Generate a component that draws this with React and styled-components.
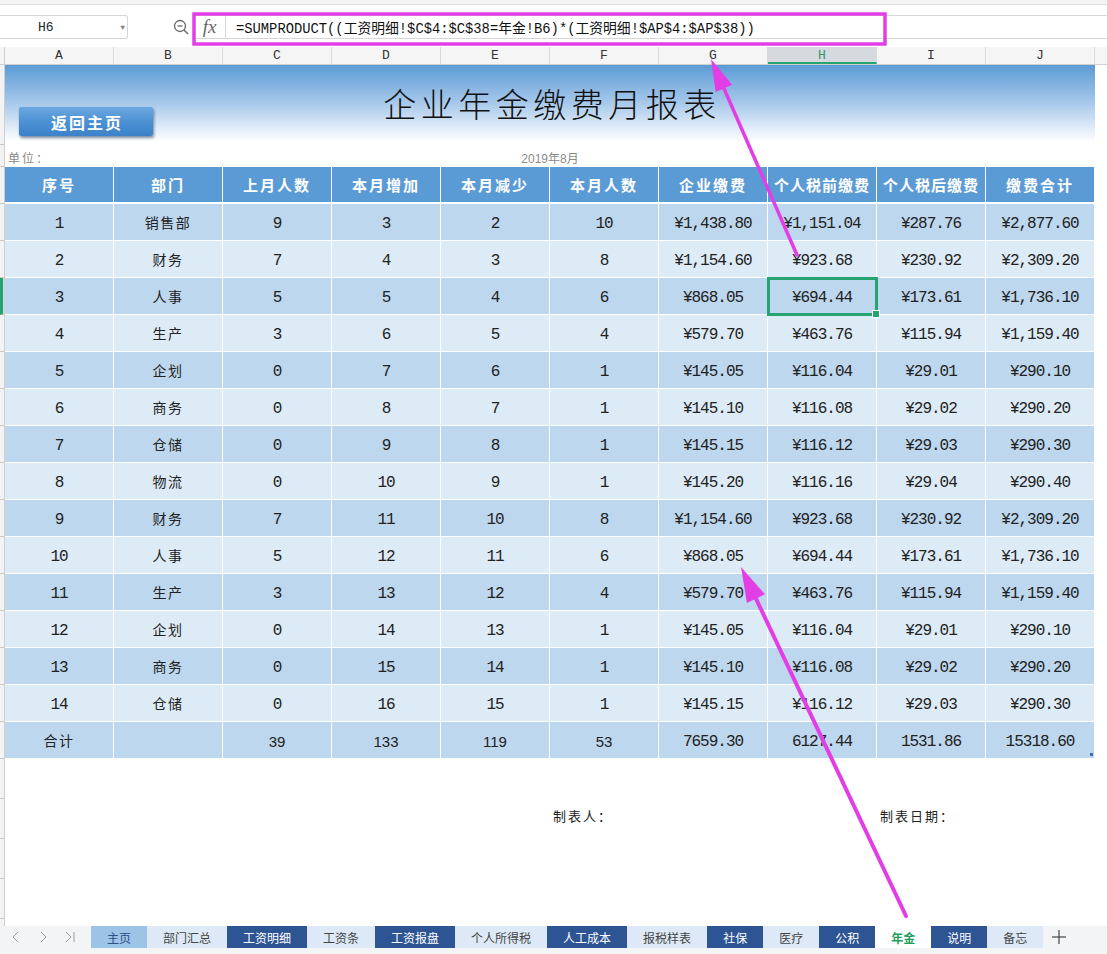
import React from "react";
import styled, { createGlobalStyle, css } from "styled-components";

const GlobalStyle = createGlobalStyle`
  html, body { margin: 0; padding: 0; background: #fff; }
  body {
    width: 1107px; height: 954px; overflow: hidden;
    font-family: "Noto Sans CJK SC", "Noto Sans", sans-serif;
    color: #222;
  }
  * { box-sizing: border-box; }
`;

const MONO = `"Liberation Mono", "Noto Sans CJK SC", monospace`;
const CJK = `"Noto Sans CJK SC", "Noto Sans", sans-serif`;

const Window = styled.div`
  position: relative;
  width: 1107px;
  height: 954px;
  display: flex;
  flex-direction: column;
  background: #fff;
`;

const TopStrip = styled.div`
  height: 5px;
  background: #f4f4f4;
  border-bottom: 1px solid #dedede;
`;

const FormulaRow = styled.div`
  height: 42px;
  display: flex;
  align-items: center;
  padding-top: 2px;
`;

const NameBox = styled.div`
  width: 128px;
  height: 24px;
  border: 1px solid #d6d6d6;
  border-left: none;
  border-radius: 0 3px 3px 0;
  display: flex;
  align-items: center;
  padding-left: 38px;
  font-family: ${MONO};
  font-size: 13px;
  color: #222;
`;

const Caret = styled.span`
  margin-left: auto;
  margin-right: 2px;
  font-size: 8px;
  color: #888;
`;

const ZoomIcon = styled.svg`
  margin-left: 45px;
  width: 16px;
  height: 16px;
  flex: none;
`;

const FxCell = styled.div`
  margin-left: 5px;
  width: 32px;
  height: 24px;
  border-top: 1px solid #d6d6d6;
  border-bottom: 1px solid #d6d6d6;
  border-right: 1px solid #d6d6d6;
  display: flex;
  align-items: center;
  justify-content: center;
  font-family: "Liberation Serif", serif;
  font-style: italic;
  font-size: 19px;
  color: #666;
`;

const FormulaInput = styled.div`
  flex: 1;
  height: 24px;
  border-top: 1px solid #d6d6d6;
  border-bottom: 1px solid #d6d6d6;
  display: flex;
  align-items: center;
  padding-left: 10px;
  font-family: ${MONO};
  font-size: 13.8px;
  color: #111;
  white-space: nowrap;
`;

const ColHeadRow = styled.div`
  height: 18px;
  display: flex;
  background: #f5f5f5;
  border-bottom: 1px solid #cfcfcf;
`;

const CornerCell = styled.div`
  width: 5px;
  border-right: 1px solid #cccccc;
`;

const ColHead = styled.div`
  width: 109px;
  flex: none;
  display: flex;
  align-items: center;
  justify-content: center;
  border-right: 1px solid #dadada;
  font-family: ${MONO};
  font-size: 13px;
  color: #333;
  ${(p) =>
    p.$active &&
    css`
      background: #d6d9dd;
      color: #2f9a6a;
      border-bottom: 2px solid #25a472;
      padding-top: 2px;
    `}
`;

const ColRest = styled.div`
  flex: 1;
`;

const Sheet = styled.div`
  flex: 1;
  min-height: 0;
  display: flex;
  overflow: hidden;
`;

const RowHeads = styled.div`
  width: 5px;
  flex: none;
  display: flex;
  flex-direction: column;
  background: #f3f3f3;
  border-right: 1px solid #cfcfcf;
`;

const RowSeg = styled.div`
  height: ${(p) => p.$h}px;
  flex: none;
  border-bottom: 1px solid #c8c8c8;
  ${(p) =>
    p.$active &&
    css`
      border-left: 3px solid #25a472;
      background: #d6d9dd;
    `}
`;

const SheetBody = styled.div`
  width: 1090px;
  flex: none;
  display: flex;
  flex-direction: column;
`;

const SheetRest = styled.div`
  flex: 1;
`;

const TitleBand = styled.div`
  height: 80px;
  display: grid;
  grid-template-columns: 1fr auto 1fr;
  align-items: center;
  background: linear-gradient(to bottom, #5b9bd5 0%, #a3c6ea 45%, #ffffff 96%);
`;

const BackButton = styled.div`
  justify-self: start;
  align-self: end;
  margin: 0 0 9px 14px;
  width: 134px;
  height: 29px;
  border-radius: 2px;
  background: linear-gradient(to bottom, #6ba8df 0%, #4a8fd2 55%, #3c82c8 100%);
  box-shadow: 1px 2px 3px rgba(30, 50, 80, 0.55);
  display: flex;
  align-items: center;
  justify-content: center;
  color: #fff;
  font-family: ${CJK};
  font-size: 16px;
  font-weight: 700;
  letter-spacing: 2px;
  padding-left: 2px;
`;

const Title = styled.h1`
  grid-column: 2;
  margin: 0;
  padding-bottom: 4px;
  font-family: ${CJK};
  font-weight: 300;
  font-size: 33px;
  letter-spacing: 4.5px;
  color: #111;
  padding-left: 4px;
`;

const InfoRow = styled.div`
  height: 22px;
  display: grid;
  grid-template-columns: 1fr auto 1fr;
  align-items: end;
  padding-bottom: 1px;
  font-size: 12px;
  color: #8a8a8a;
`;

const UnitLabel = styled.span`
  padding-left: 3px;
  letter-spacing: 2px;
  font-family: ${CJK};
`;

const MonthLabel = styled.span`
  font-family: "Liberation Sans", ${CJK};
  font-size: 12px;
`;

const Table = styled.div`
  position: relative;
  display: flex;
  flex-direction: column;
`;

const HeaderRow = styled.div`
  display: grid;
  grid-template-columns: repeat(10, 109px);
  height: 37px;
  background: #5b9bd5;
  border-bottom: 2px solid #fff;
`;

const HeaderCell = styled.div`
  display: flex;
  align-items: center;
  justify-content: center;
  border-right: 1px solid #fff;
  color: #fff;
  font-family: ${CJK};
  font-weight: 700;
  font-size: 15px;
  letter-spacing: ${(p) => (p.$tight ? "1px" : "2px")};
  white-space: nowrap;
`;

const DataRow = styled.div`
  display: grid;
  grid-template-columns: repeat(10, 109px);
  height: 37px;
  background: ${(p) => (p.$alt ? "#ddebf7" : "#bdd7ee")};
  border-bottom: 1px solid #fff;
`;

const Cell = styled.div`
  display: flex;
  align-items: center;
  justify-content: center;
  border-right: 1px solid #fff;
  white-space: nowrap;
  color: #222;
  ${(p) =>
    p.$kind === "text"
      ? css`
          font-family: ${CJK};
          font-size: 14px;
          letter-spacing: 1.5px;
        `
      : p.$kind === "sans"
      ? css`
          font-family: "Liberation Sans", sans-serif;
          font-size: 15px;
          padding-top: 2px;
        `
      : css`
          font-family: ${MONO};
          font-size: 16px;
          letter-spacing: -1px;
          padding-top: 4px;
        `}
`;

const SelectionBox = styled.div`
  position: absolute;
  left: ${(p) => p.$col * 109 - 1}px;
  top: ${(p) => 37 + p.$row * 37 - 1}px;
  width: 111px;
  height: 39px;
  border: 3px solid #25a472;
  pointer-events: none;
  &::after {
    content: "";
    position: absolute;
    right: -5px;
    bottom: -5px;
    width: 6px;
    height: 6px;
    background: #25a472;
    border: 1px solid #fff;
  }
`;

const FillDot = styled.div`
  position: absolute;
  right: 2px;
  bottom: 3px;
  width: 3px;
  height: 3px;
  background: #3b6fb6;
`;

const SignRow = styled.div`
  display: grid;
  grid-template-columns: repeat(10, 109px);
  padding-top: 47px;
`;

const SignText = styled.div`
  grid-column: ${(p) => p.$col};
  padding-left: 3px;
  font-family: ${CJK};
  font-size: 13px;
  letter-spacing: 2px;
  color: #222;
  white-space: nowrap;
`;

const TabBar = styled.div`
  height: 28px;
  display: flex;
  align-items: flex-start;
  background: #f3f4f6;
`;

const TabNav = styled.div`
  width: 91px;
  height: 22px;
  flex: none;
  display: flex;
  align-items: center;
  padding-left: 10px;
  gap: 15px;
`;

const NavIcon = styled.svg`
  width: 12px;
  height: 12px;
`;

const Tab = styled.div`
  height: 22px;
  padding: 0 ${(p) => p.$pad || 16}px;
  display: flex;
  align-items: center;
  font-family: ${CJK};
  font-size: 12px;
  white-space: nowrap;
  ${(p) =>
    p.$v === "dark"
      ? css`
          background: #2d5493;
          color: #fff;
        `
      : p.$v === "home"
      ? css`
          background: #9dc3e6;
          color: #2e4f86;
        `
      : p.$v === "active"
      ? css`
          background: #fff;
          color: #1e9e5c;
          font-weight: 700;
        `
      : css`
          background: #dde9f6;
          color: #444;
        `}
`;

const AddTab = styled.svg`
  margin-left: 9px;
  margin-top: 4px;
  width: 14px;
  height: 14px;
`;

const Overlay = styled.svg`
  position: absolute;
  left: 0;
  top: 0;
  width: 1107px;
  height: 954px;
  pointer-events: none;
  z-index: 10;
`;

const headers = [
  "序号", "部门", "上月人数", "本月增加", "本月减少",
  "本月人数", "企业缴费", "个人税前缴费", "个人税后缴费", "缴费合计",
];

const rows = [
  [1, "销售部", 9, 3, 2, 10, "¥1,438.80", "¥1,151.04", "¥287.76", "¥2,877.60"],
  [2, "财务", 7, 4, 3, 8, "¥1,154.60", "¥923.68", "¥230.92", "¥2,309.20"],
  [3, "人事", 5, 5, 4, 6, "¥868.05", "¥694.44", "¥173.61", "¥1,736.10"],
  [4, "生产", 3, 6, 5, 4, "¥579.70", "¥463.76", "¥115.94", "¥1,159.40"],
  [5, "企划", 0, 7, 6, 1, "¥145.05", "¥116.04", "¥29.01", "¥290.10"],
  [6, "商务", 0, 8, 7, 1, "¥145.10", "¥116.08", "¥29.02", "¥290.20"],
  [7, "仓储", 0, 9, 8, 1, "¥145.15", "¥116.12", "¥29.03", "¥290.30"],
  [8, "物流", 0, 10, 9, 1, "¥145.20", "¥116.16", "¥29.04", "¥290.40"],
  [9, "财务", 7, 11, 10, 8, "¥1,154.60", "¥923.68", "¥230.92", "¥2,309.20"],
  [10, "人事", 5, 12, 11, 6, "¥868.05", "¥694.44", "¥173.61", "¥1,736.10"],
  [11, "生产", 3, 13, 12, 4, "¥579.70", "¥463.76", "¥115.94", "¥1,159.40"],
  [12, "企划", 0, 14, 13, 1, "¥145.05", "¥116.04", "¥29.01", "¥290.10"],
  [13, "商务", 0, 15, 14, 1, "¥145.10", "¥116.08", "¥29.02", "¥290.20"],
  [14, "仓储", 0, 16, 15, 1, "¥145.15", "¥116.12", "¥29.03", "¥290.30"],
];

const totals = ["合计", "", "39", "133", "119", "53", "7659.30", "6127.44", "1531.86", "15318.60"];

const tabs = [
  ["主页", "home"], ["部门汇总", "light"], ["工资明细", "dark"], ["工资条", "light"],
  ["工资报盘", "dark"], ["个人所得税", "light"], ["人工成本", "dark"], ["报税样表", "light"],
  ["社保", "dark"], ["医疗", "light"], ["公积", "dark"], ["年金", "active"],
  ["说明", "dark"], ["备忘", "light"],
];

const cols = ["A", "B", "C", "D", "E", "F", "G", "H", "I", "J"];

const rowSegs = [
  { h: 80 }, { h: 22 }, { h: 37 },
  ...rows.map((r, i) => ({ h: 37, active: i === 2 })),
  { h: 37 }, { h: 40 }, { h: 40 }, { h: 40 }, { h: 40 },
];

function Arrow({ tail, tip, w, len, half }) {
  const dx = tip[0] - tail[0];
  const dy = tip[1] - tail[1];
  const L = Math.hypot(dx, dy);
  const ux = dx / L;
  const uy = dy / L;
  const bx = tip[0] - ux * len;
  const by = tip[1] - uy * len;
  const nx = -uy;
  const ny = ux;
  const pts = `${tip[0]},${tip[1]} ${bx + nx * half},${by + ny * half} ${bx - nx * half},${by - ny * half}`;
  return (
    <g fill="#e33ee6" stroke="#e33ee6">
      <line x1={tail[0]} y1={tail[1]} x2={bx} y2={by} strokeWidth={w} strokeLinecap="round" />
      <polygon points={pts} stroke="none" />
    </g>
  );
}

export default function App() {
  return (
    <>
      <GlobalStyle />
      <Window>
        <TopStrip />
        <FormulaRow>
          <NameBox>
            H6
            <Caret>▼</Caret>
          </NameBox>
          <ZoomIcon viewBox="0 0 16 16">
            <circle cx="7" cy="7" r="5.5" fill="none" stroke="#666" strokeWidth="1.3" />
            <line x1="4.5" y1="7" x2="9.5" y2="7" stroke="#666" strokeWidth="1.3" />
            <line x1="11" y1="11" x2="15" y2="15" stroke="#666" strokeWidth="1.5" />
          </ZoomIcon>
          <FxCell>fx</FxCell>
          <FormulaInput>=SUMPRODUCT((工资明细!$C$4:$C$38=年金!B6)*(工资明细!$AP$4:$AP$38))</FormulaInput>
        </FormulaRow>
        <ColHeadRow>
          <CornerCell />
          {cols.map((c) => (
            <ColHead key={c} $active={c === "H"}>
              {c}
            </ColHead>
          ))}
          <ColRest />
        </ColHeadRow>
        <Sheet>
          <RowHeads>
            {rowSegs.map((s, i) => (
              <RowSeg key={i} $h={s.h} $active={s.active} />
            ))}
          </RowHeads>
          <SheetBody>
            <TitleBand>
              <BackButton>返回主页</BackButton>
              <Title>企业年金缴费月报表</Title>
            </TitleBand>
            <InfoRow>
              <UnitLabel>单位：</UnitLabel>
              <MonthLabel>2019年8月</MonthLabel>
            </InfoRow>
            <Table>
              <HeaderRow>
                {headers.map((h) => (
                  <HeaderCell key={h} $tight={h.length > 5}>
                    {h}
                  </HeaderCell>
                ))}
              </HeaderRow>
              {rows.map((r, i) => (
                <DataRow key={i} $alt={i % 2 === 1}>
                  {r.map((v, j) => (
                    <Cell key={j} $kind={j === 1 ? "text" : "mono"}>
                      {v}
                    </Cell>
                  ))}
                </DataRow>
              ))}
              <DataRow $alt={false}>
                {totals.map((v, j) => (
                  <Cell key={j} $kind={j < 2 ? "text" : j < 6 ? "sans" : "mono"}>
                    {v}
                  </Cell>
                ))}
              </DataRow>
              <SelectionBox $col={7} $row={2} />
              <FillDot />
            </Table>
            <SignRow>
              <SignText $col={6}>制表人：</SignText>
              <SignText $col={9}>制表日期：</SignText>
            </SignRow>
          </SheetBody>
          <SheetRest />
        </Sheet>
        <TabBar>
          <TabNav>
            <NavIcon viewBox="0 0 12 12">
              <polyline points="8,1 3,6 8,11" fill="none" stroke="#9a9a9a" strokeWidth="1" />
            </NavIcon>
            <NavIcon viewBox="0 0 12 12">
              <polyline points="4,1 9,6 4,11" fill="none" stroke="#9a9a9a" strokeWidth="1" />
            </NavIcon>
            <NavIcon viewBox="0 0 12 12">
              <polyline points="2,1 7,6 2,11" fill="none" stroke="#9a9a9a" strokeWidth="1" />
              <line x1="10" y1="1" x2="10" y2="11" stroke="#9a9a9a" strokeWidth="1" />
            </NavIcon>
          </TabNav>
          {tabs.map(([t, v]) => (
            <Tab key={t} $v={v}>
              {t}
            </Tab>
          ))}
          <AddTab viewBox="0 0 14 14">
            <line x1="7" y1="0" x2="7" y2="14" stroke="#444" strokeWidth="1.2" />
            <line x1="0" y1="7" x2="14" y2="7" stroke="#444" strokeWidth="1.2" />
          </AddTab>
        </TabBar>
        <Overlay viewBox="0 0 1107 954">
          <rect x="194" y="14" width="691" height="30" fill="none" stroke="#e33ee6" strokeWidth="3.5" />
          <Arrow tail={[797, 255]} tip={[711, 59]} w={3.5} len={32} half={9} />
          <Arrow tail={[906, 916]} tip={[741, 567]} w={4} len={35} half={10} />
        </Overlay>
      </Window>
    </>
  );
}
